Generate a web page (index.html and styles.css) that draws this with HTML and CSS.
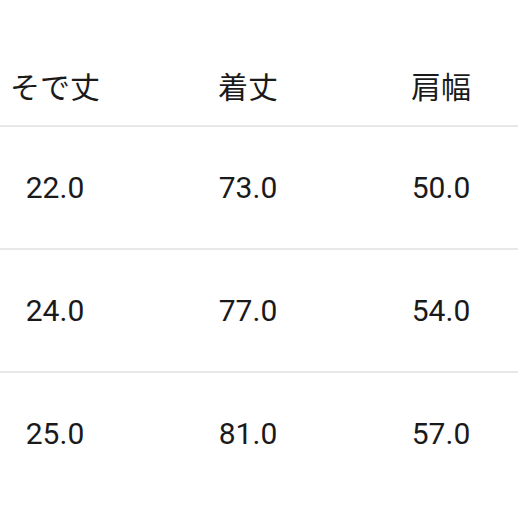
FILE: index.html
```html
<!DOCTYPE html>
<html lang="ja">
<head>
<meta charset="utf-8">
<link rel="stylesheet" href="styles.css">
</head>
<body>
<div class="table">
  <div class="row head">
    <div class="cell">そで丈</div>
    <div class="cell">着丈</div>
    <div class="cell">肩幅</div>
  </div>
  <div class="row">
    <div class="cell">22.0</div>
    <div class="cell">73.0</div>
    <div class="cell">50.0</div>
  </div>
  <div class="row">
    <div class="cell">24.0</div>
    <div class="cell">77.0</div>
    <div class="cell">54.0</div>
  </div>
  <div class="row last">
    <div class="cell">25.0</div>
    <div class="cell">81.0</div>
    <div class="cell">57.0</div>
  </div>
</div>
</body>
</html>
```
FILE: styles.css
```css
html, body {
  margin: 0;
  padding: 0;
  background: #ffffff;
  width: 518px;
  height: 518px;
  overflow: hidden;
}
.table {
  width: 518px;
  font-family: Roboto, "Noto Sans CJK JP", sans-serif;
  color: #1a1a1a;
}
.row {
  display: grid;
  grid-template-columns: 110px 276px 110px;
  align-items: center;
  height: 121px;
  border-bottom: 2px solid #e8e8e8;
  font-size: 30px;
  line-height: 1;
}
.row.head {
  height: 127px;
  box-sizing: border-box;
  padding-top: 44px;
  font-size: 30px;
  font-family: "Noto Sans CJK JP", sans-serif;
}
.row.last {
  border-bottom: none;
}
.cell {
  text-align: center;
  white-space: nowrap;
}
```
